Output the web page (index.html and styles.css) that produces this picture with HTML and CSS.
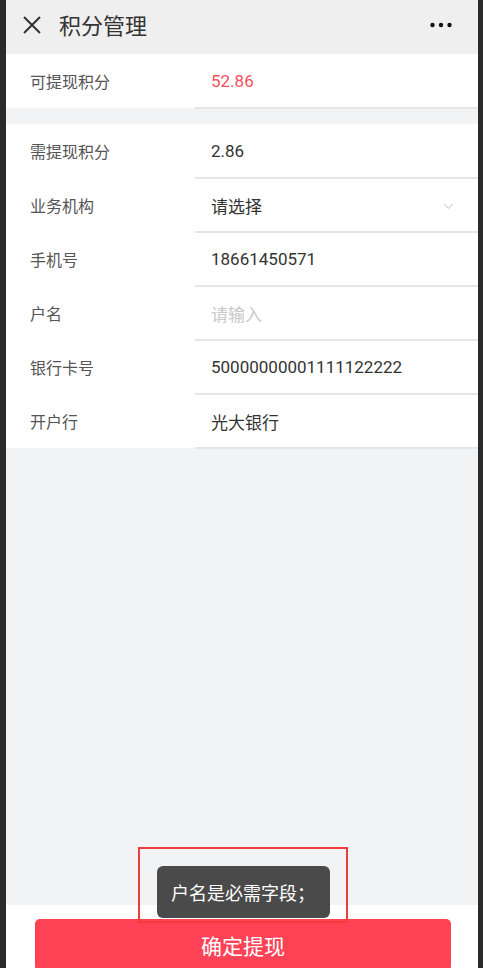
FILE: index.html
```html
<!DOCTYPE html>
<html lang="zh-CN">
<head>
  <meta charset="UTF-8" />
  <meta name="viewport" content="width=device-width, initial-scale=1.0" />
  <title>积分管理</title>
  <link rel="stylesheet" href="styles.css">
</head>
<body>
  <div class="screen">
    <!-- Top bar -->
    <div class="topbar">
      <svg class="close" width="18" height="18" viewBox="0 0 18 18">
        <path d="M1 1 L17 17 M17 1 L1 17" stroke="#333" stroke-width="2" fill="none" />
      </svg>
      <span class="title">积分管理</span>
      <svg class="more" width="22" height="6" viewBox="0 0 22 6">
        <circle cx="2.5" cy="3" r="2.2" fill="#111" />
        <circle cx="11" cy="3" r="2.2" fill="#111" />
        <circle cx="19.5" cy="3" r="2.2" fill="#111" />
      </svg>
    </div>

    <!-- Available points -->
    <div class="group">
      <div class="row">
        <span class="label">可提现积分</span>
        <span class="value red">52.86</span>
      </div>
    </div>

    <!-- Withdraw form -->
    <div class="group second">
      <div class="row">
        <span class="label">需提现积分</span>
        <span class="value">2.86</span>
      </div>
      <div class="row">
        <span class="label">业务机构</span>
        <span class="value">请选择</span>
        <svg class="chevron" width="9" height="5" viewBox="0 0 9 5">
          <path d="M0.5 0.5 L4.5 4.2 L8.5 0.5" stroke="#bbb" stroke-width="1" fill="none" />
        </svg>
      </div>
      <div class="row">
        <span class="label">手机号</span>
        <span class="value">18661450571</span>
      </div>
      <div class="row">
        <span class="label">户名</span>
        <span class="value placeholder">请输入</span>
      </div>
      <div class="row">
        <span class="label">银行卡号</span>
        <span class="value">50000000001111122222</span>
      </div>
      <div class="row">
        <span class="label">开户行</span>
        <span class="value">光大银行</span>
      </div>
    </div>

    <div class="spacer"></div>

    <!-- Bottom action -->
    <div class="footer">
      <button class="submit">确定提现</button>
    </div>

    <!-- Toast message -->
    <div class="toast-mark">
      <div class="toast">户名是必需字段；</div>
    </div>
  </div>
</body>
</html>
```

FILE: styles.css
```css
html, body {
  margin: 0;
  padding: 0;
  height: 100%;
}
body {
  background: #2a2a2a;
  font-family: Roboto, "Noto Sans CJK SC", sans-serif;
  padding: 0 5px 0 6px;
  box-sizing: border-box;
  overflow: hidden;
}
.screen {
  position: relative;
  height: 968px;
  background: #f2f3f5;
  display: flex;
  flex-direction: column;
}
.topbar {
  height: 54px;
  background: #efefef;
  display: flex;
  align-items: center;
  padding: 0 26px 6px 17px;
  box-sizing: border-box;
}
.close {
  margin-right: 18px;
  margin-top: 1px;
}
.title {
  font-size: 22px;
  color: #333;
  flex: 1;
}
.more {
  margin-top: 2px;
}
.group {
  background: #fff;
}
.group.second {
  margin-top: 16px;
}
.row {
  display: flex;
  align-items: center;
  height: 54px;
  position: relative;
}
.row::after {
  content: "";
  position: absolute;
  left: 189px;
  right: 0;
  bottom: -1px;
  height: 2px;
  background: #e6e6e6;
}
.label {
  width: 181px;
  padding-left: 24px;
  font-size: 16px;
  color: #555;
  flex-shrink: 0;
}
.value {
  flex: 1;
  font-size: 17px;
  color: #333;
}
.value.red {
  color: #f5505e;
}
.value.placeholder {
  color: #c8c8c8;
}
.chevron {
  margin-right: 25px;
  margin-top: 2px;
}
.spacer {
  flex: 1;
}
.footer {
  height: 63px;
  background: #fff;
  padding: 14px 27px 0 29px;
  box-sizing: border-box;
}
.submit {
  display: block;
  width: 100%;
  height: 52px;
  border: none;
  border-radius: 5px;
  background: #fe4255;
  color: #fff;
  font-size: 21px;
  font-family: Roboto, "Noto Sans CJK SC", sans-serif;
}
.toast-mark {
  position: absolute;
  left: 132px;
  top: 847px;
  width: 206px;
  height: 69px;
  border: 2px solid #f23b3b;
  display: flex;
  align-items: flex-end;
  justify-content: center;
  padding-bottom: 3px;
}
.toast {
  width: 173px;
  height: 52px;
  background: #4a4a4a;
  border-radius: 6px;
  color: #fff;
  font-size: 18px;
  display: flex;
  align-items: center;
  justify-content: center;
}
```
